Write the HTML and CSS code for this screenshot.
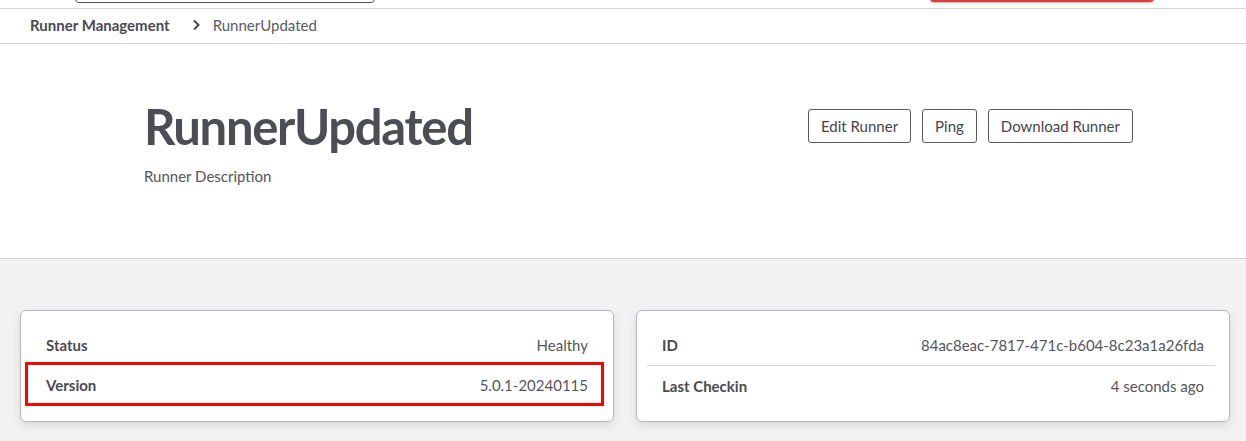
FILE: index.html
```html
<!DOCTYPE html>
<html lang="en">
<head>
<meta charset="utf-8">
<title>RunnerUpdated</title>
<link rel="stylesheet" href="styles.css">
</head>
<body>
<header class="topbar">
  <div class="search"></div>
  <div class="spacer"></div>
  <div class="danger-btn"></div>
</header>
<nav class="breadcrumb">
  <span class="crumb-parent">Runner Management</span>
  <svg class="crumb-sep" width="10" height="12" viewBox="0 0 10 12"><path d="M3 1.5 L7.5 6 L3 10.5" fill="none" stroke="#4a4a52" stroke-width="2"/></svg>
  <span class="crumb-current">RunnerUpdated</span>
</nav>
<section class="hero">
  <div class="hero-inner">
    <div class="hero-text">
      <h1 class="title">RunnerUpdated</h1>
      <p class="desc">Runner Description</p>
    </div>
    <div class="actions">
      <button class="btn">Edit Runner</button>
      <button class="btn">Ping</button>
      <button class="btn">Download Runner</button>
    </div>
  </div>
</section>
<main class="content">
  <div class="card">
    <ul class="rows">
      <li class="row"><span class="label">Status</span><span class="value">Healthy</span></li>
      <li class="row highlight"><span class="label">Version</span><span class="value">5.0.1-20240115</span></li>
    </ul>
  </div>
  <div class="card">
    <ul class="rows">
      <li class="row"><span class="label">ID</span><span class="value">84ac8eac-7817-471c-b604-8c23a1a26fda</span></li>
      <li class="row divided"><span class="label">Last Checkin</span><span class="value">4 seconds ago</span></li>
    </ul>
  </div>
</main>
</body>
</html>
```

FILE: styles.css
```css
* { box-sizing: border-box; }
html, body { margin: 0; padding: 0; }
body {
  font-family: "Lato", "Open Sans", sans-serif;
  color: #4a4a52;
  background: #f2f2f2;
  width: 1246px;
  height: 441px;
  overflow: hidden;
}
.topbar {
  height: 9px;
  background: #fff;
  border-bottom: 1px solid #d4d4d4;
  display: flex;
  align-items: flex-end;
  overflow: hidden;
  padding: 0 92px 5px 75px;
}
.search {
  width: 300px;
  height: 36px;
  border: 1px solid #555;
  border-radius: 4px;
  flex: none;
}
.spacer { flex: 1; }
.danger-btn {
  width: 224px;
  height: 36px;
  background: #e33a3a;
  border-radius: 4px;
  box-shadow: 0 1px 2px rgba(0,0,0,0.3);
  flex: none;
  margin-bottom: 1px;
}
.breadcrumb {
  height: 35px;
  background: #fff;
  border-bottom: 1px solid #d4d4d4;
  display: flex;
  align-items: center;
  padding-left: 30px;
  padding-bottom: 2px;
  font-size: 15px;
}
.crumb-parent { font-weight: 700; color: #4a4a52; }
.crumb-sep { margin: 0 12px 0 21px; }
.crumb-current { color: #5a5a62; }
.hero {
  background: #fff;
  border-bottom: 1px solid #d4d4d4;
  height: 215px;
}
.hero-inner {
  display: flex;
  justify-content: space-between;
  align-items: flex-start;
  padding: 52px 113px 0 144px;
}
.title {
  margin: 0;
  font-size: 49px;
  font-weight: 700;
  letter-spacing: -1.3px;
  color: #4d4d55;
  line-height: 60px;
}
.desc {
  margin: 11px 0 0 0;
  font-size: 15px;
  color: #55555c;
}
.actions {
  display: flex;
  gap: 11px;
  margin-top: 13px;
}
.btn {
  font-family: inherit;
  font-size: 15px;
  color: #45454c;
  background: #fff;
  border: 1px solid #5a5a60;
  border-radius: 3px;
  height: 34px;
  padding: 0 12px;
  cursor: pointer;
}
.content {
  display: flex;
  gap: 22px;
  padding: 51px 16px 0 20px;
}
.card {
  flex: 1;
  background: #fff;
  border: 1px solid #b4b4bc;
  border-radius: 6px;
  box-shadow: 0 4px 10px rgba(0,0,0,0.1);
  height: 112px;
}
.rows {
  list-style: none;
  margin: 0;
  padding: 14px 14px 0 10px;
}
.row {
  height: 40px;
  display: flex;
  justify-content: space-between;
  align-items: center;
  padding: 0 11px 0 15px;
  font-size: 15px;
}
.row.divided { border-top: 1px solid #d6d6da; }
.row.highlight { position: relative; }
.row.highlight::after {
  content: "";
  position: absolute;
  left: -6px;
  right: -5px;
  top: -3px;
  bottom: -1px;
  border: 3px solid #f00;
}
.label { font-weight: 700; color: #4a4a52; }
.value { color: #55555c; }
```
